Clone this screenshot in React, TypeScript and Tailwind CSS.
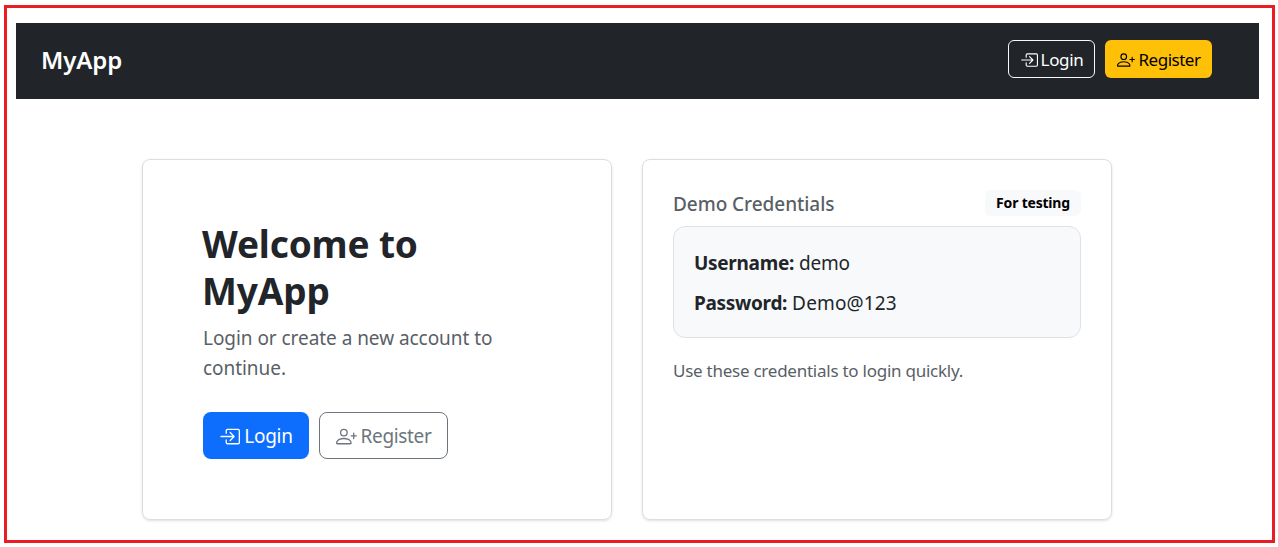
import { BsBoxArrowInRight, BsPersonPlus } from "react-icons/bs";

export default function App() {
  return (
    <div className="w-[1278px] h-[547px] overflow-hidden bg-white pt-[5px] pl-[4px] font-['Noto_Sans',sans-serif] text-[#212529]">
      <div className="w-[1271px] h-[538px] border-[3px] border-[#ed1c24] pt-[15px] pl-[9px] pr-[13px]">
        <nav className="h-[76px] bg-[#212529] flex items-center pl-[26px] pr-[47px] pb-[4px]">
          <span className="text-[24px] font-semibold text-white tracking-[-0.1px] -ml-px mt-[2px]">MyApp</span>
          <div className="ml-auto flex items-center gap-[10px]">
            <button className="w-[87px] h-[38px] pt-[2px] flex items-center justify-center gap-[3px] rounded-[6px] border border-[#f8f9fa] text-white text-[17px] tracking-[-0.35px]">
              <BsBoxArrowInRight className="w-[18px] h-[18px]" />
              Login
            </button>
            <button className="w-[107px] h-[38px] pt-[2px] flex items-center justify-center gap-[4px] rounded-[6px] bg-[#ffc107] text-black text-[17px] tracking-[-0.5px]">
              <BsPersonPlus className="w-[18px] h-[18px]" />
              Register
            </button>
          </div>
        </nav>
        <main className="flex gap-[30px] ml-[126px] mt-[60px]">
          <section className="w-[470px] h-[361px] border border-[#dcdde0] rounded-[8px] shadow-sm px-[60px] pt-[60px]">
            <h1 className="w-[300px] -ml-px text-[37px] leading-[47px] font-bold tracking-[-0.15px]">Welcome to MyApp</h1>
            <p className="text-[19px] leading-[30px] text-[#595f66] mt-[9px] tracking-[-0.05px]">Login or create a new account to continue.</p>
            <div className="flex gap-[10px] mt-[29px]">
              <button className="w-[106px] h-[47px] pt-[2px] flex items-center justify-center gap-[4px] rounded-[8px] bg-[#0d6efd] text-white text-[19px] tracking-[-0.3px]">
                <BsBoxArrowInRight className="w-[21px] h-[21px]" />
                Login
              </button>
              <button className="w-[129px] h-[47px] pt-[2px] flex items-center justify-center gap-[4px] rounded-[8px] border border-[#6c757d] text-[#6c757d] text-[19px] tracking-[-0.35px]">
                <BsPersonPlus className="w-[21px] h-[21px]" />
                Register
              </button>
            </div>
          </section>
          <section className="w-[470px] h-[361px] border border-[#dcdde0] rounded-[8px] shadow-sm px-[30px] pt-[30px]">
            <div className="flex items-center justify-between h-[26px]">
              <h2 className="text-[19px] font-medium text-[#595f66] tracking-[-0.05px] mt-[2px]">Demo Credentials</h2>
              <span className="w-[96px] h-[26px] pb-[2px] flex items-center justify-center rounded-[6px] bg-[#f8f9fa] text-[14px] font-bold text-black tracking-[-0.2px]">For testing</span>
            </div>
            <div className="mt-[10px] h-[112px] w-[408px] rounded-[12px] border border-[#dee2e6] bg-[#f8f9fa] pl-[20px] pt-[16px] text-[19px]">
              <p className="leading-[40px]"><strong className="font-bold tracking-[-0.3px]">Username:</strong> <span className="tracking-[-0.2px]">demo</span></p>
              <p className="leading-[40px]"><strong className="font-bold tracking-[-0.3px]">Password:</strong> <span className="tracking-[0.15px]">Demo@123</span></p>
            </div>
            <p className="mt-[20px] text-[17px] leading-[26px] text-[#595f66] tracking-[-0.25px]">Use these credentials to login quickly.</p>
          </section>
        </main>
      </div>
    </div>
  );
}
